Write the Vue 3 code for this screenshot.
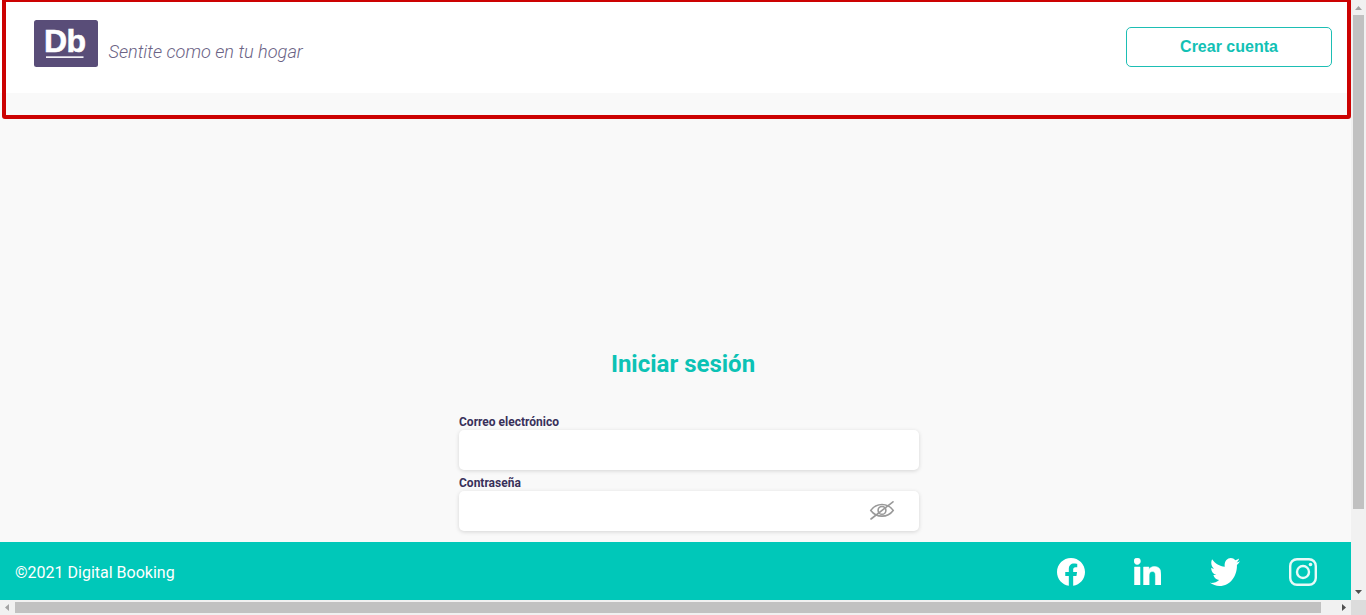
<script setup>
const year = 2021
</script>

<template>
  <div class="window">
    <div class="page">
      <header class="header">
        <div class="brand">
          <svg class="logo" width="64" height="47" viewBox="0 0 64 47">
            <rect width="64" height="47" rx="2.5" fill="#594d78" />
            <text x="10" y="31.7" class="mark">Db</text>
            <rect x="12" y="36.3" width="37.5" height="1.7" fill="#f4f2f7" />
          </svg>
          <span class="slogan">Sentite como en tu hogar</span>
        </div>
        <button class="create">Crear cuenta</button>
      </header>

      <main class="main">
        <form class="form" @submit.prevent>
          <h1 class="title">Iniciar sesión</h1>
          <label class="label" for="mail">Correo electrónico</label>
          <div class="field"><input id="mail" class="input" type="email" /></div>
          <label class="label second" for="pass">Contraseña</label>
          <div class="field">
            <input id="pass" class="input" type="password" />
            <svg class="eye" width="26" height="22" viewBox="0 0 26 22" fill="none" stroke="#999" stroke-width="1.6" stroke-linecap="round">
              <path d="M1.8 10.4C7.5 2.6 18.5 2.6 24.2 10.4C18.5 18 7.5 18 1.8 10.4Z" />
              <circle cx="13" cy="10.4" r="3.9" />
              <path d="M2 19L24 1.8" />
            </svg>
          </div>
        </form>
      </main>

      <footer class="footer">
        <span class="copy">©{{ year }} Digital Booking</span>
        <div class="social">
          <svg width="28" height="28" viewBox="8 8 496 496"><path d="M504 256C504 119 393 8 256 8S8 119 8 256c0 123.78 90.69 226.38 209.25 245V327.69h-63V256h63v-54.64c0-62.15 37-96.48 93.67-96.48 27.14 0 55.52 4.84 55.52 4.84v61h-31.28c-30.8 0-40.41 19.12-40.41 38.73V256h68.78l-11 71.69h-57.78V501C413.31 482.38 504 379.78 504 256z" /></svg>
          <svg class="linkedin" width="27" height="27" viewBox="0 0 448 448"><path d="M100.28 448H7.4V148.9h92.88zM53.79 108.1C24.09 108.1 0 83.5 0 53.8a53.79 53.79 0 0 1 107.58 0c0 29.7-24.1 54.3-53.79 54.3zM447.9 448h-92.68V302.4c0-34.7-.7-79.2-48.29-79.2-48.29 0-55.69 37.7-55.69 76.7V448h-92.78V148.9h89.08v40.8h1.3c12.4-23.5 42.69-48.3 87.88-48.3 94 0 111.28 61.9 111.28 142.3V448z" /></svg>
          <svg class="twitter" width="30" height="28" viewBox="0 48 512 416" preserveAspectRatio="none"><path d="M459.37 151.716c.325 4.548.325 9.097.325 13.645 0 138.72-105.583 298.558-298.558 298.558-59.452 0-114.68-17.219-161.137-47.106 8.447.974 16.568 1.299 25.34 1.299 49.055 0 94.213-16.568 130.274-44.832-46.132-.975-84.792-31.188-98.112-72.772 6.498.974 12.995 1.624 19.818 1.624 9.421 0 18.843-1.3 27.614-3.573-48.081-9.747-84.143-51.98-84.143-102.985v-1.299c13.969 7.797 30.214 12.67 47.431 13.319-28.264-18.843-46.781-51.005-46.781-87.391 0-19.492 5.197-37.36 14.294-52.954 51.655 63.675 129.3 105.258 216.365 109.807-1.624-7.797-2.599-15.918-2.599-24.04 0-57.828 46.782-104.934 104.934-104.934 30.213 0 57.502 12.67 76.67 33.137 23.715-4.548 46.456-13.32 66.599-25.34-7.798 24.366-24.366 44.833-46.132 57.827 21.117-2.273 41.584-8.122 60.426-16.243-14.292 20.791-32.161 39.308-52.628 54.253z" /></svg>
          <svg class="instagram" width="28" height="28" viewBox="0 0 28 28">
            <rect x="1.2" y="1.2" width="25.6" height="25.6" rx="6.8" />
            <circle cx="14" cy="14" r="6" />
            <circle class="dot" cx="21.5" cy="6.5" r="1.8" />
          </svg>
        </div>
      </footer>
      <div class="frame"></div>
    </div>

    <div class="vbar">
      <svg width="15" height="15" viewBox="0 0 15 15"><path d="M4 10L7.5 6L11 10Z" fill="#a3a3a3" /></svg>
      <div class="vthumb"></div>
      <svg class="end" width="15" height="15" viewBox="0 0 15 15"><path d="M4 5L11 5L7.5 9Z" fill="#505050" /></svg>
    </div>
    <div class="hbar">
      <svg width="15" height="15" viewBox="0 0 15 15"><path d="M9 4L5 7.5L9 11Z" fill="#a3a3a3" /></svg>
      <div class="hthumb"></div>
      <svg class="end" width="15" height="15" viewBox="0 0 15 15"><path d="M6 4L10 7.5L6 11Z" fill="#505050" /></svg>
    </div>
    <div class="corner"></div>
  </div>
</template>

<style>
html, body { margin: 0; overflow: hidden; }
</style>

<style scoped>
* { box-sizing: border-box; }
.window {
  display: grid;
  grid-template: 600px 15px / 1351px 15px;
  width: 1366px;
  height: 615px;
  font-family: Roboto, "Liberation Sans", sans-serif;
}
.page {
  position: relative;
  display: flex;
  flex-direction: column;
  overflow: hidden;
  background: #f9f9f9;
}
.header {
  display: flex;
  justify-content: space-between;
  flex: 0 0 93px;
  padding: 20px 19px 0 34px;
  background: #fff;
}
.brand { display: flex; align-items: flex-start; gap: 10.5px; }
.logo { display: block; }
.mark {
  font: 700 32px "Liberation Sans", sans-serif;
  letter-spacing: -0.7px;
  fill: #fff;
  stroke: #fff;
  stroke-width: 0.6;
}
.slogan {
  margin-top: 20px;
  color: #6b6385;
  font-size: 18.15px;
  font-style: italic;
  font-weight: 300;
  line-height: 23px;
  white-space: nowrap;
}
.create {
  width: 206px;
  height: 40px;
  margin-top: 7px;
  padding: 0;
  border: 1px solid #1dbeb4;
  border-radius: 5px;
  background: #fff;
  color: #12c1b5;
  font: bold 16px "Liberation Sans", sans-serif;
}
.main { flex: 1; padding: 256px 0 0 459px; }
.form { width: 460px; }
.title {
  margin: 0 0 43px;
  padding-right: 12px;
  color: #0cc2b5;
  font-size: 24px;
  font-weight: 700;
  line-height: 30px;
  text-align: center;
}
.label {
  display: block;
  height: 8px;
  color: #383059;
  font-size: 12px;
  font-weight: 700;
  line-height: 0;
}
.second { margin-top: 13px; }
.field {
  display: flex;
  align-items: center;
  height: 40px;
  padding-right: 24px;
  border-radius: 5px;
  background: #fff;
  box-shadow: 0 1px 4px rgba(0, 0, 0, 0.15);
}
.input { flex: 1; min-width: 0; height: 38px; border: 0; outline: 0; background: none; }
.footer {
  display: flex;
  align-items: center;
  justify-content: space-between;
  flex: 0 0 58px;
  padding: 1px 34px 0 15px;
  background: #00c8b9;
  color: #fff;
}
.copy { padding-top: 2px; font-size: 16px; }
.social { display: flex; align-items: center; fill: #fff; }
.linkedin { margin-left: 49px; stroke: #fff; stroke-width: 8; }
.twitter { margin-left: 49px; }
.instagram { margin-left: 49px; fill: none; stroke: #e9faf8; stroke-width: 2.4; }
.dot { fill: #e9faf8; stroke: none; }
.frame {
  position: absolute;
  top: -2px;
  left: 2px;
  width: 1349px;
  height: 121px;
  border: 4px solid #cc0202;
  border-radius: 3px;
}
.vbar { display: flex; flex-direction: column; align-items: center; background: #f1f1f1; }
.vthumb { width: 11px; height: 494px; background: #c1c1c1; }
.end { margin-top: auto; }
.hbar { display: flex; align-items: center; background: #f1f1f1; }
.hthumb { width: 1306px; height: 11px; background: #c1c1c1; }
.hbar .end { margin: 0 0 0 auto; }
.corner { background: #dcdcdc; }
</style>
